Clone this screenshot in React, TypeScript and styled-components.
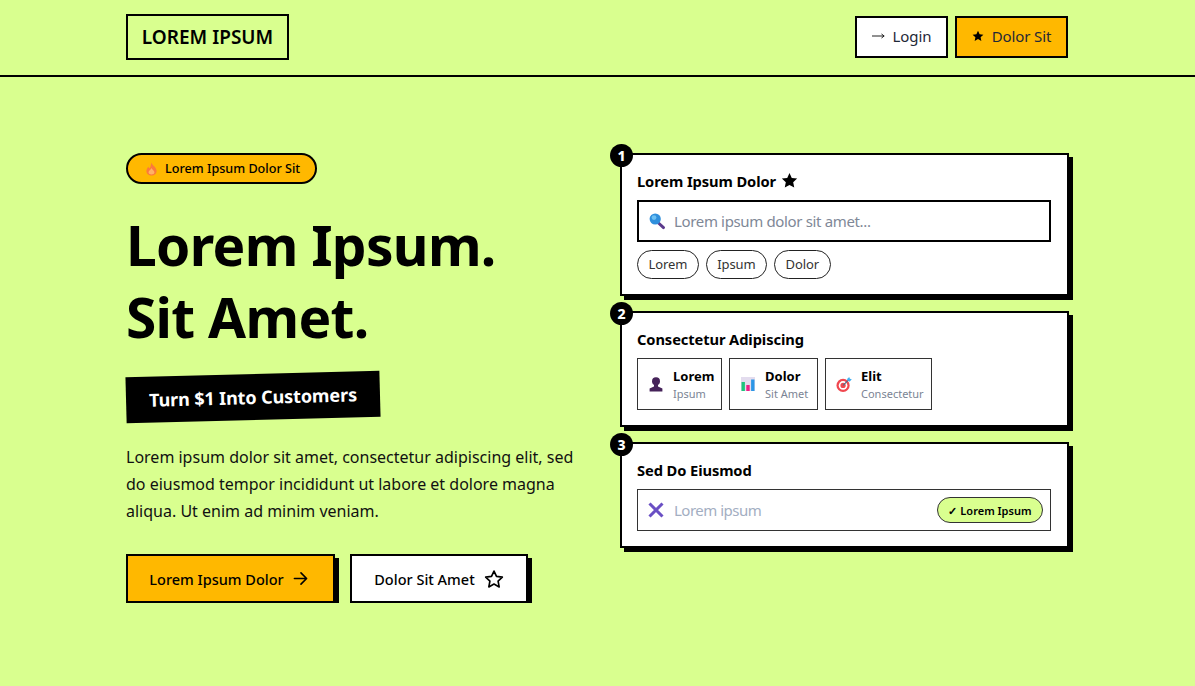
import { createGlobalStyle, styled } from "styled-components"

const GlobalStyle = createGlobalStyle`
	html, body {
		margin: 0;
		padding: 0;
		background: #d9ff8f;
		color: #000;
		font-family: "Noto Sans", "Open Sans", sans-serif;
	}
`

function FireIcon() {
	return (
		<svg width="13" height="16" viewBox="0 0 14 16">
			<path d="M7 1C7.5 4 12.5 6 12.5 10.2C12.5 13.2 10 15 7 15C4 15 1.5 13.2 1.5 10.2C1.5 8 2.8 6.5 3.8 5.5C4.2 6.8 4.7 7.2 5.3 7.2C6.2 5.5 6.2 3 7 1Z" fill="#fb7a3c" />
			<path d="M7 6.8C7.8 8.6 10.2 9.8 10.2 11.6C10.2 13.3 8.6 14 7 14C5.4 14 3.8 13.3 3.8 11.6C3.8 9.8 6.2 8.6 7 6.8Z" fill="#ffb266" />
		</svg>
	)
}

function SearchIcon() {
	return (
		<svg width="18" height="18" viewBox="0 0 18 18">
			<path d="M10.5 11L15.5 15.6" stroke="#5b3a8c" strokeWidth="3" strokeLinecap="round" />
			<circle cx="7.2" cy="7" r="5.6" fill="#2f8fdc" />
			<circle cx="6" cy="5.6" r="2.4" fill="#6cc0f2" />
		</svg>
	)
}

function PersonIcon() {
	return (
		<svg width="16" height="16" viewBox="0 0 16 16">
			<circle cx="8" cy="5.2" r="4" fill="#452259" />
			<path d="M6 8H10V10.4L14.4 12.6V15.4H1.6V12.6L6 10.4Z" fill="#452259" />
		</svg>
	)
}

function ChartIcon() {
	return (
		<svg width="16" height="16" viewBox="0 0 16 16">
			<rect x="1" y="1" width="14" height="14" fill="#e3dcee" />
			<rect x="1.5" y="6" width="3.4" height="9" fill="#1fc47d" />
			<rect x="6.3" y="9" width="3.4" height="6" fill="#ee1f86" />
			<rect x="11.1" y="3.5" width="3.4" height="11.5" fill="#2b96e6" />
		</svg>
	)
}

function TargetIcon() {
	return (
		<svg width="16" height="17" viewBox="0 0 17 17">
			<circle cx="7.5" cy="9.5" r="7" fill="#f0474f" />
			<circle cx="7.5" cy="9.5" r="4.6" fill="#fff" />
			<circle cx="7.5" cy="9.5" r="2.8" fill="#f0474f" />
			<path d="M7.5 9.5L14 3" stroke="#4a6d8c" strokeWidth="1.2" />
			<path d="M11.5 3L14 0.5L14.8 2.4L16.8 3L14.4 5.5Z" fill="#45b0f0" />
		</svg>
	)
}

function CrossIcon() {
	return (
		<svg width="16" height="16" viewBox="0 0 16 16">
			<path d="M1.5 1.5L14.5 14.5M14.5 1.5L1.5 14.5" stroke="#6a4fc4" strokeWidth="3" />
		</svg>
	)
}

function SolidStar({ size }: { size: number }) {
	return (
		<svg width={size} height={size} viewBox="0 0 24 24">
			<path d="M12 1.5L15.2 8.4L22.8 9.3L17.2 14.5L18.7 22L12 18.2L5.3 22L6.8 14.5L1.2 9.3L8.8 8.4Z" fill="#000" />
		</svg>
	)
}

function OutlineStar() {
	return (
		<svg width="20" height="20" viewBox="0 0 24 24" fill="none" stroke="#000" strokeWidth="2" strokeLinejoin="round">
			<path d="M12 2.5L15 8.9L22 9.8L16.9 14.6L18.2 21.5L12 18.1L5.8 21.5L7.1 14.6L2 9.8L9 8.9Z" />
		</svg>
	)
}

function ArrowIcon() {
	return (
		<svg width="15" height="15" viewBox="0 0 16 16" fill="none" stroke="#000" strokeWidth="1.7" strokeLinecap="round" strokeLinejoin="round">
			<path d="M1.5 8H14M8.5 2L14.5 8L8.5 14" />
		</svg>
	)
}

function ThinArrow() {
	return (
		<svg width="13" height="8" viewBox="0 0 13 8" fill="none" stroke="#222" strokeWidth="1">
			<path d="M0 4H12M9.5 2L12.2 4L9.5 6" />
		</svg>
	)
}

const OPTIONS = [
	{ icon: <PersonIcon />, title: "Lorem", sub: "Ipsum", width: 85 },
	{ icon: <ChartIcon />, title: "Dolor", sub: "Sit Amet", width: 89 },
	{ icon: <TargetIcon />, title: "Elit", sub: "Consectetur", width: 107 },
]

export default function App() {
	return (
		<>
			<GlobalStyle />
			<Header>
				<HeaderInner>
					<Logo>LOREM IPSUM</Logo>
					<Nav>
						<NavButton $width={93}><ThinArrow />Login</NavButton>
						<NavButton $width={113} $primary><SolidStar size={12} />Dolor Sit</NavButton>
					</Nav>
				</HeaderInner>
			</Header>
			<Hero>
				<LeftColumn>
					<Badge><FireIcon />Lorem Ipsum Dolor Sit</Badge>
					<Title>Lorem Ipsum.<br />Sit Amet.</Title>
					<Slogan>Turn $1 Into Customers</Slogan>
					<Description>
						Lorem ipsum dolor sit amet, consectetur adipiscing elit, sed do eiusmod tempor incididunt ut labore et dolore magna aliqua. Ut enim ad minim veniam.
					</Description>
					<Actions>
						<ActionButton $width={209} $primary>Lorem Ipsum Dolor<ArrowIcon /></ActionButton>
						<ActionButton $width={178}>Dolor Sit Amet<OutlineStar /></ActionButton>
					</Actions>
				</LeftColumn>
				<RightColumn>
					<Card $height={143}>
						<Step>1</Step>
						<CardTitle>Lorem Ipsum Dolor<SolidStar size={17} /></CardTitle>
						<SearchBox>
							<SearchIcon />
							<span>Lorem ipsum dolor sit amet...</span>
						</SearchBox>
						<Chips>
							<Chip>Lorem</Chip>
							<Chip>Ipsum</Chip>
							<Chip>Dolor</Chip>
						</Chips>
					</Card>
					<Card $height={116}>
						<Step>2</Step>
						<CardTitle>Consectetur Adipiscing</CardTitle>
						<Options>
							{OPTIONS.map((item) => (
								<Option key={item.title} $width={item.width}>
									{item.icon}
									<OptionText>
										<strong>{item.title}</strong>
										<small>{item.sub}</small>
									</OptionText>
								</Option>
							))}
						</Options>
					</Card>
					<Card $height={106}>
						<Step>3</Step>
						<CardTitle>Sed Do Eiusmod</CardTitle>
						<ResultBox>
							<CrossIcon />
							<ResultPlaceholder>Lorem ipsum</ResultPlaceholder>
							<ResultPill>✓ Lorem Ipsum</ResultPill>
						</ResultBox>
					</Card>
				</RightColumn>
			</Hero>
		</>
	)
}

const Header = styled.header`
	height: 75px;
	border-bottom: 2px solid #000;
`

const HeaderInner = styled.div`
	width: 943px;
	height: 100%;
	margin-left: 126px;
	display: flex;
	align-items: center;
	justify-content: space-between;
`

const Logo = styled.div`
	box-sizing: border-box;
	width: 163px;
	height: 46px;
	margin-top: -1px;
	border: 2px solid #000;
	display: flex;
	align-items: center;
	justify-content: center;
	font-size: 19px;
	font-weight: 600;
	white-space: nowrap;
`

const Nav = styled.nav`
	display: flex;
	gap: 7px;
	margin: -1px 1px 0 0;
`

const NavButton = styled.div<{ $width: number, $primary?: boolean }>`
	box-sizing: border-box;
	width: ${props => props.$width}px;
	height: 42px;
	padding-bottom: 2px;
	border: 2px solid #000;
	background: ${props => props.$primary ? "#ffb800" : "#fff"};
	display: flex;
	align-items: center;
	justify-content: center;
	gap: 8px;
	font-size: 15px;
	letter-spacing: -0.1px;
	color: #1f2937;
`

const Hero = styled.main`
	width: 943px;
	margin-left: 126px;
	padding-top: 76px;
	display: flex;
	justify-content: space-between;
`

const LeftColumn = styled.section`
	width: 460px;
	display: flex;
	flex-direction: column;
	align-items: flex-start;
`

const Badge = styled.div`
	box-sizing: border-box;
	width: 191px;
	height: 31px;
	border: 2px solid #000;
	border-radius: 16px;
	background: #ffb800;
	display: flex;
	align-items: center;
	padding-left: 17px;
	gap: 7px;
	font-size: 12.6px;
	font-weight: 500;
	white-space: nowrap;
`

const Title = styled.h1`
	margin: 25px 0 0;
	font-size: 55px;
	line-height: 72px;
	font-weight: 700;
	letter-spacing: -0.7px;
	white-space: nowrap;
`

const Slogan = styled.div`
	margin-top: 21px;
	box-sizing: border-box;
	width: 254px;
	height: 46px;
	background: #000;
	color: #fff;
	display: flex;
	align-items: center;
	justify-content: center;
	font-size: 18px;
	font-weight: 700;
	letter-spacing: -0.1px;
	transform: rotate(-1.5deg);
	white-space: nowrap;
`

const Description = styled.p`
	margin: 24px 0 0;
	width: 460px;
	font-size: 16px;
	line-height: 27px;
	color: #111;
`

const Actions = styled.div`
	margin-top: 29px;
	display: flex;
	gap: 15px;
`

const ActionButton = styled.div<{ $width: number, $primary?: boolean }>`
	box-sizing: border-box;
	width: ${props => props.$width}px;
	height: 49px;
	padding-right: ${props => props.$primary ? 4 : 0}px;
	border: 2px solid #000;
	background: ${props => props.$primary ? "#ffb800" : "#fff"};
	box-shadow: 4px 4px 0 #000;
	display: flex;
	align-items: center;
	justify-content: center;
	gap: 9px;
	font-size: 14.5px;
	font-weight: 500;
	white-space: nowrap;
`

const RightColumn = styled.section`
	width: 449px;
	display: flex;
	flex-direction: column;
	gap: 15px;
`

const Card = styled.article<{ $height: number }>`
	position: relative;
	box-sizing: border-box;
	height: ${props => props.$height}px;
	padding: 14px 16px 0 15px;
	border: 2px solid #000;
	background: #fff;
	box-shadow: 4px 4px 0 #000;
`

const Step = styled.span`
	position: absolute;
	left: -12px;
	top: -11px;
	width: 23px;
	height: 23px;
	border-radius: 50%;
	background: #000;
	color: #fff;
	display: flex;
	align-items: center;
	justify-content: center;
	font-size: 14px;
	font-weight: 800;
`

const CardTitle = styled.h2`
	margin: 0;
	height: 23px;
	display: flex;
	align-items: center;
	gap: 5px;
	font-size: 14.7px;
	font-weight: 700;
	letter-spacing: -0.1px;
	white-space: nowrap;
`

const SearchBox = styled.div`
	box-sizing: border-box;
	margin-top: 8px;
	height: 42px;
	border: 2px solid #000;
	display: flex;
	align-items: center;
	padding-left: 9px;
	gap: 8px;
	font-size: 15px;
	letter-spacing: -0.35px;
	color: #808897;
`

const Chips = styled.div`
	display: flex;
	gap: 7px;
	margin-top: 8px;
`

const Chip = styled.span`
	box-sizing: border-box;
	height: 29px;
	padding: 0 10.5px 2px;
	border: 1px solid #222;
	border-radius: 15px;
	display: flex;
	align-items: center;
	font-size: 13px;
	letter-spacing: -0.1px;
	color: #333;
`

const Options = styled.div`
	display: flex;
	gap: 7px;
	margin-top: 8px;
`

const Option = styled.div<{ $width: number }>`
	box-sizing: border-box;
	width: ${props => props.$width}px;
	height: 52px;
	border: 1px solid #333;
	display: flex;
	align-items: center;
	padding-left: 10px;
	gap: 9px;
`

const OptionText = styled.div`
	display: flex;
	flex-direction: column;
	padding-top: 2px;
	line-height: 17px;
	white-space: nowrap;

	strong {
		font-size: 13px;
		font-weight: 700;
	}

	small {
		font-size: 11px;
		color: #7b8494;
	}
`

const ResultBox = styled.div`
	box-sizing: border-box;
	margin-top: 8px;
	height: 42px;
	border: 1px solid #333;
	display: flex;
	align-items: center;
	padding: 0 7px 0 10px;
	gap: 10px;
`

const ResultPlaceholder = styled.span`
	flex: 1;
	font-size: 15px;
	letter-spacing: -0.5px;
	color: #a3aec2;
`

const ResultPill = styled.span`
	box-sizing: border-box;
	width: 106px;
	height: 26px;
	border: 1px solid #333;
	border-radius: 13px;
	background: #d9ff8f;
	display: flex;
	align-items: center;
	justify-content: center;
	font-size: 11px;
	font-weight: 600;
	white-space: nowrap;
`
